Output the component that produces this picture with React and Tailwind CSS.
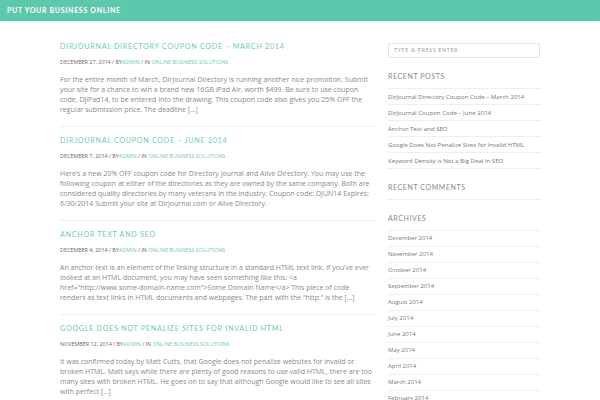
const posts = [
  {
    title: 'DirJournal Directory Coupon Code – March 2014',
    date: 'December 27, 2014',
    text: 'For the entire month of March, DirJournal Directory is running another nice promotion. Submit your site for a chance to win a brand new 16GB iPad Air, worth $499. Be sure to use coupon code, DjiPad14, to be entered into the drawing. This coupon code also gives you 25% OFF the regular submission price. The deadline […]',
  },
  {
    title: 'DirJournal Coupon Code – June 2014',
    date: 'December 7, 2014',
    text: 'Here’s a new 20% OFF coupon code for Directory Journal and Alive Directory. You may use the following coupon at either of the directories as they are owned by the same company. Both are considered quality directories by many veterans in the industry. Coupon code: DJUN14 Expires: 6/30/2014 Submit your site at DirJournal.com or Alive Directory.',
  },
  {
    title: 'Anchor Text and SEO',
    date: 'December 4, 2014',
    text: 'An anchor text is an element of the linking structure in a standard HTML text link. If you’ve ever looked at an HTML document, you may have seen something like this: <a href="http://www.some-domain-name.com">Some Domain Name</a> This piece of code renders as text links in HTML documents and webpages. The part with the “http:” is the […]',
  },
  {
    title: 'Google Does Not Penalize Sites for Invalid HTML',
    date: 'November 12, 2014',
    text: 'It was confirmed today by Matt Cutts, that Google does not penalize websites for invalid or broken HTML. Matt says while there are plenty of good reasons to use valid HTML, there are too many sites with broken HTML. He goes on to say that although Google would like to see all sites with perfect […]',
  },
]

const recent = [
  'DirJournal Directory Coupon Code – March 2014',
  'DirJournal Coupon Code – June 2014',
  'Anchor Text and SEO',
  'Google Does Not Penalize Sites for Invalid HTML',
  'Keyword Density is Not a Big Deal in SEO',
]

const archives = [
  'December 2014', 'November 2014', 'October 2014', 'September 2014', 'August 2014',
  'July 2014', 'June 2014', 'May 2014', 'April 2014', 'March 2014', 'February 2014',
]

const lato = { fontFamily: 'Lato, "Open Sans", sans-serif' }

function WidgetTitle({ children }) {
  return (
    <h3 className="mt-[13px] mb-[7px] text-[7px] leading-[10px] tracking-[0.6px] uppercase text-[#888]" style={lato}>
      {children}
    </h3>
  )
}

function LinkList({ items, size }) {
  return (
    <ul className="border-b border-[#eee]">
      {items.map(i => (
        <li key={i} className={'h-[16px] border-t border-[#eee] flex items-center text-[#777] ' + size}>{i}</li>
      ))}
    </ul>
  )
}

export default function App() {
  return (
    <div className="w-[600px] h-[400px] overflow-hidden bg-white" style={{ fontFamily: '"Open Sans", sans-serif' }}>
      <header className="h-[21px] bg-[#5ec8ad] flex items-center pl-[7px] shadow-[0_1px_2px_rgba(0,0,0,0.08)]">
        <span className="text-white font-bold text-[7px] tracking-[0.7px] uppercase" style={lato}>Put Your Business Online</span>
      </header>

      <div className="flex pl-[60px]">
        <main className="w-[316px] pt-[20px]">
          {posts.map(p => (
            <article key={p.title} className="border-b border-[#eee] mb-[8px] pb-[11px]">
              <h2 className="text-[7.2px] leading-[12px] tracking-[0.7px] uppercase text-[#6fcab3]" style={lato}>{p.title}</h2>
              <div className="mt-[4.5px] text-[5.4px] leading-[8px] uppercase text-[#666]">
                {p.date} / By<span className="text-[#6fcab3]">admin</span> / In <span className="text-[#6fcab3]">Online Business Solutions</span>
              </div>
              <p className="mt-[9.5px] text-[7px] leading-[10px] text-[#8a8a8a]">{p.text}</p>
            </article>
          ))}
        </main>

        <aside className="ml-[12px] w-[152px] pt-[22px]">
          <div className="h-[15px] border border-[#e5e5e5] flex items-center pl-[5px] text-[5.5px] tracking-[0.6px] text-[#999] uppercase">
            Type &amp; Press Enter
          </div>
          <WidgetTitle>Recent Posts</WidgetTitle>
          <LinkList items={recent} size="text-[6.1px]" />
          <WidgetTitle>Recent Comments</WidgetTitle>
          <div className="border-t border-[#eee]" />
          <WidgetTitle>Archives</WidgetTitle>
          <LinkList items={archives} size="text-[6px]" />
        </aside>
      </div>
    </div>
  )
}
